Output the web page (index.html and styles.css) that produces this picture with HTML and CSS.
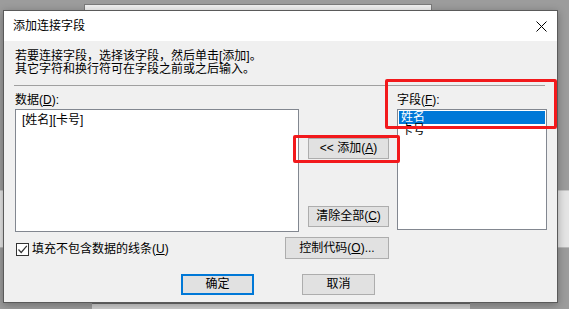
FILE: index.html
```html
<!DOCTYPE html>
<html lang="zh-CN">
<head>
    <meta charset="UTF-8">
    <title>添加连接字段</title>
    <link rel="stylesheet" href="styles.css">
</head>
<body>
    <div class="desktop">
        <div class="bg-window bg-top"></div>
        <div class="bg-band"></div>
        <div class="bg-window bg-bottom"></div>

        <div class="dialog">
            <div class="titlebar">
                <span class="title">添加连接字段</span>
                <svg class="close" width="11" height="11" viewBox="0 0 11 11">
                    <path d="M0.5 0.5 L10.5 10.5 M10.5 0.5 L0.5 10.5" stroke="#000" stroke-width="1" fill="none"/>
                </svg>
            </div>
            <div class="content">
                <p class="hint">若要连接字段，选择该字段，然后单击[添加]。<br>其它字符和换行符可在字段之前或之后输入。</p>
                <div class="sep"></div>
                <div class="fields">
                    <div class="label">数据(<u>D</u>):</div>
                    <div></div>
                    <div class="label">字段(<u>F</u>):</div>

                    <div class="databox">[姓名][卡号]</div>
                    <div class="mid">
                        <div class="add-wrap">
                            <button class="btn btn-add">&lt;&lt; 添加(<u>A</u>)</button>
                            <span class="mark mark-add"></span>
                        </div>
                        <button class="btn btn-clear">清除全部(<u>C</u>)</button>
                    </div>
                    <ul class="listbox">
                        <li class="selected">姓名</li>
                        <li>卡号</li>
                    </ul>
                </div>
                <div class="options">
                    <label class="check">
                        <span class="box">
                            <svg width="11" height="11" viewBox="0 0 11 11">
                                <path d="M1.5 5.5 L4.2 8.5 L9.8 1.8" stroke="#333" stroke-width="1.2" fill="none"/>
                            </svg>
                        </span>
                        <span>填充不包含数据的线条(<u>U</u>)</span>
                    </label>
                    <button class="btn btn-code">控制代码(<u>O</u>)...</button>
                </div>
                <div class="actions">
                    <button class="btn btn-ok">确定</button>
                    <button class="btn btn-cancel">取消</button>
                </div>
            </div>
            <span class="mark mark-field"></span>
        </div>
    </div>
</body>
</html>
```

FILE: styles.css
```css
* {
    margin: 0;
    padding: 0;
    box-sizing: border-box;
}
body {
    font-family: "Liberation Sans", "Noto Sans CJK SC", sans-serif;
    font-size: 12px;
    color: #000;
    background: #9a9a9a;
    overflow: hidden;
}
.desktop {
    position: relative;
    width: 569px;
    height: 309px;
    background: #9c9c9c;
}

/* windows lying behind the dialog */
.bg-window {
    position: absolute;
}
.bg-top {
    left: 84px;
    top: 4px;
    width: 348px;
    height: 30px;
    background: #f0f0f0;
    border: 1px solid #7a7a7a;
}
.bg-bottom {
    left: 92px;
    top: 303px;
    width: 378px;
    height: 10px;
    background: #cfcfcf;
    border-top: 1px solid #6e6e6e;
}
.bg-band {
    position: absolute;
    left: 0;
    top: 190px;
    width: 569px;
    height: 58px;
    background: #e4e4e4;
    border-top: 1px solid #c4c4c4;
    border-bottom: 1px solid #b8b8b8;
}

/* dialog */
.dialog {
    position: absolute;
    left: 3px;
    top: 10px;
    width: 555px;
    height: 293px;
    border: 1px solid #5a5a5a;
    background: #f0f0f0;
    box-shadow: 0 2px 8px rgba(0, 0, 0, 0.3);
}
.titlebar {
    height: 30px;
    background: #fff;
    display: flex;
    align-items: center;
    justify-content: space-between;
    padding: 0 10px 0 9px;
}
.title {
    line-height: 30px;
    font-size: 12px;
}
.close {
    display: block;
}
.content {
    padding: 9px 10px 0 11px;
}
.hint {
    line-height: 13px;
}
.sep {
    margin: 9px 0 0 -1px;
    width: 531px;
    border-top: 1px solid #a0a0a0;
}
.fields {
    display: grid;
    grid-template-columns: 284px 98px 150px;
    margin-top: 8px;
}
.label {
    line-height: 13px;
    margin-bottom: 2px;
}
u {
    text-decoration: underline;
    text-underline-offset: 1px;
}
.databox {
    height: 123px;
    background: #fff;
    border: 1px solid #828790;
    padding: 4px 6px;
    line-height: 13px;
}
.mid {
    padding-left: 9px;
    display: flex;
    flex-direction: column;
}
.add-wrap {
    position: relative;
    margin-top: 29px;
}
.btn {
    font-family: inherit;
    font-size: 12px;
    color: #000;
    background: #e1e1e1;
    border: 1px solid #adadad;
    height: 21px;
    line-height: 19px;
    display: block;
}
.btn-add,
.btn-clear {
    width: 81px;
}
.btn-clear {
    margin-top: 47px;
}
.listbox {
    list-style: none;
    height: 121px;
    background: #fff;
    border: 1px solid #828790;
    padding: 1px;
}
.listbox li {
    line-height: 13px;
    height: 13px;
    padding-left: 2px;
}
.listbox .selected {
    background: #0078d7;
    color: #fff;
}
.options {
    width: 374px;
    height: 22px;
    margin-top: 5px;
    display: flex;
    align-items: center;
    justify-content: space-between;
}
.check {
    display: flex;
    align-items: center;
    gap: 3px;
    line-height: 13px;
    margin-top: 2px;
}
.box {
    width: 13px;
    height: 13px;
    margin-left: 1px;
    border: 1px solid #333;
    background: #fff;
    display: flex;
    align-items: center;
    justify-content: center;
}
.box svg {
    display: block;
}
.btn-code {
    width: 104px;
    height: 22px;
}
.actions {
    display: flex;
    gap: 48px;
    margin: 15px 0 0 166px;
}
.btn-ok,
.btn-cancel {
    width: 73px;
}
.btn-ok {
    border: 2px solid #0078d7;
    line-height: 17px;
}

/* red annotation frames drawn over the screenshot */
.mark {
    position: absolute;
    border: 3px solid #f2191c;
    border-radius: 2px;
    pointer-events: none;
}
.mark-add {
    left: -15px;
    top: -3px;
    width: 107px;
    height: 28px;
}
.mark-field {
    left: 381px;
    top: 68px;
    width: 172px;
    height: 50px;
}
```
